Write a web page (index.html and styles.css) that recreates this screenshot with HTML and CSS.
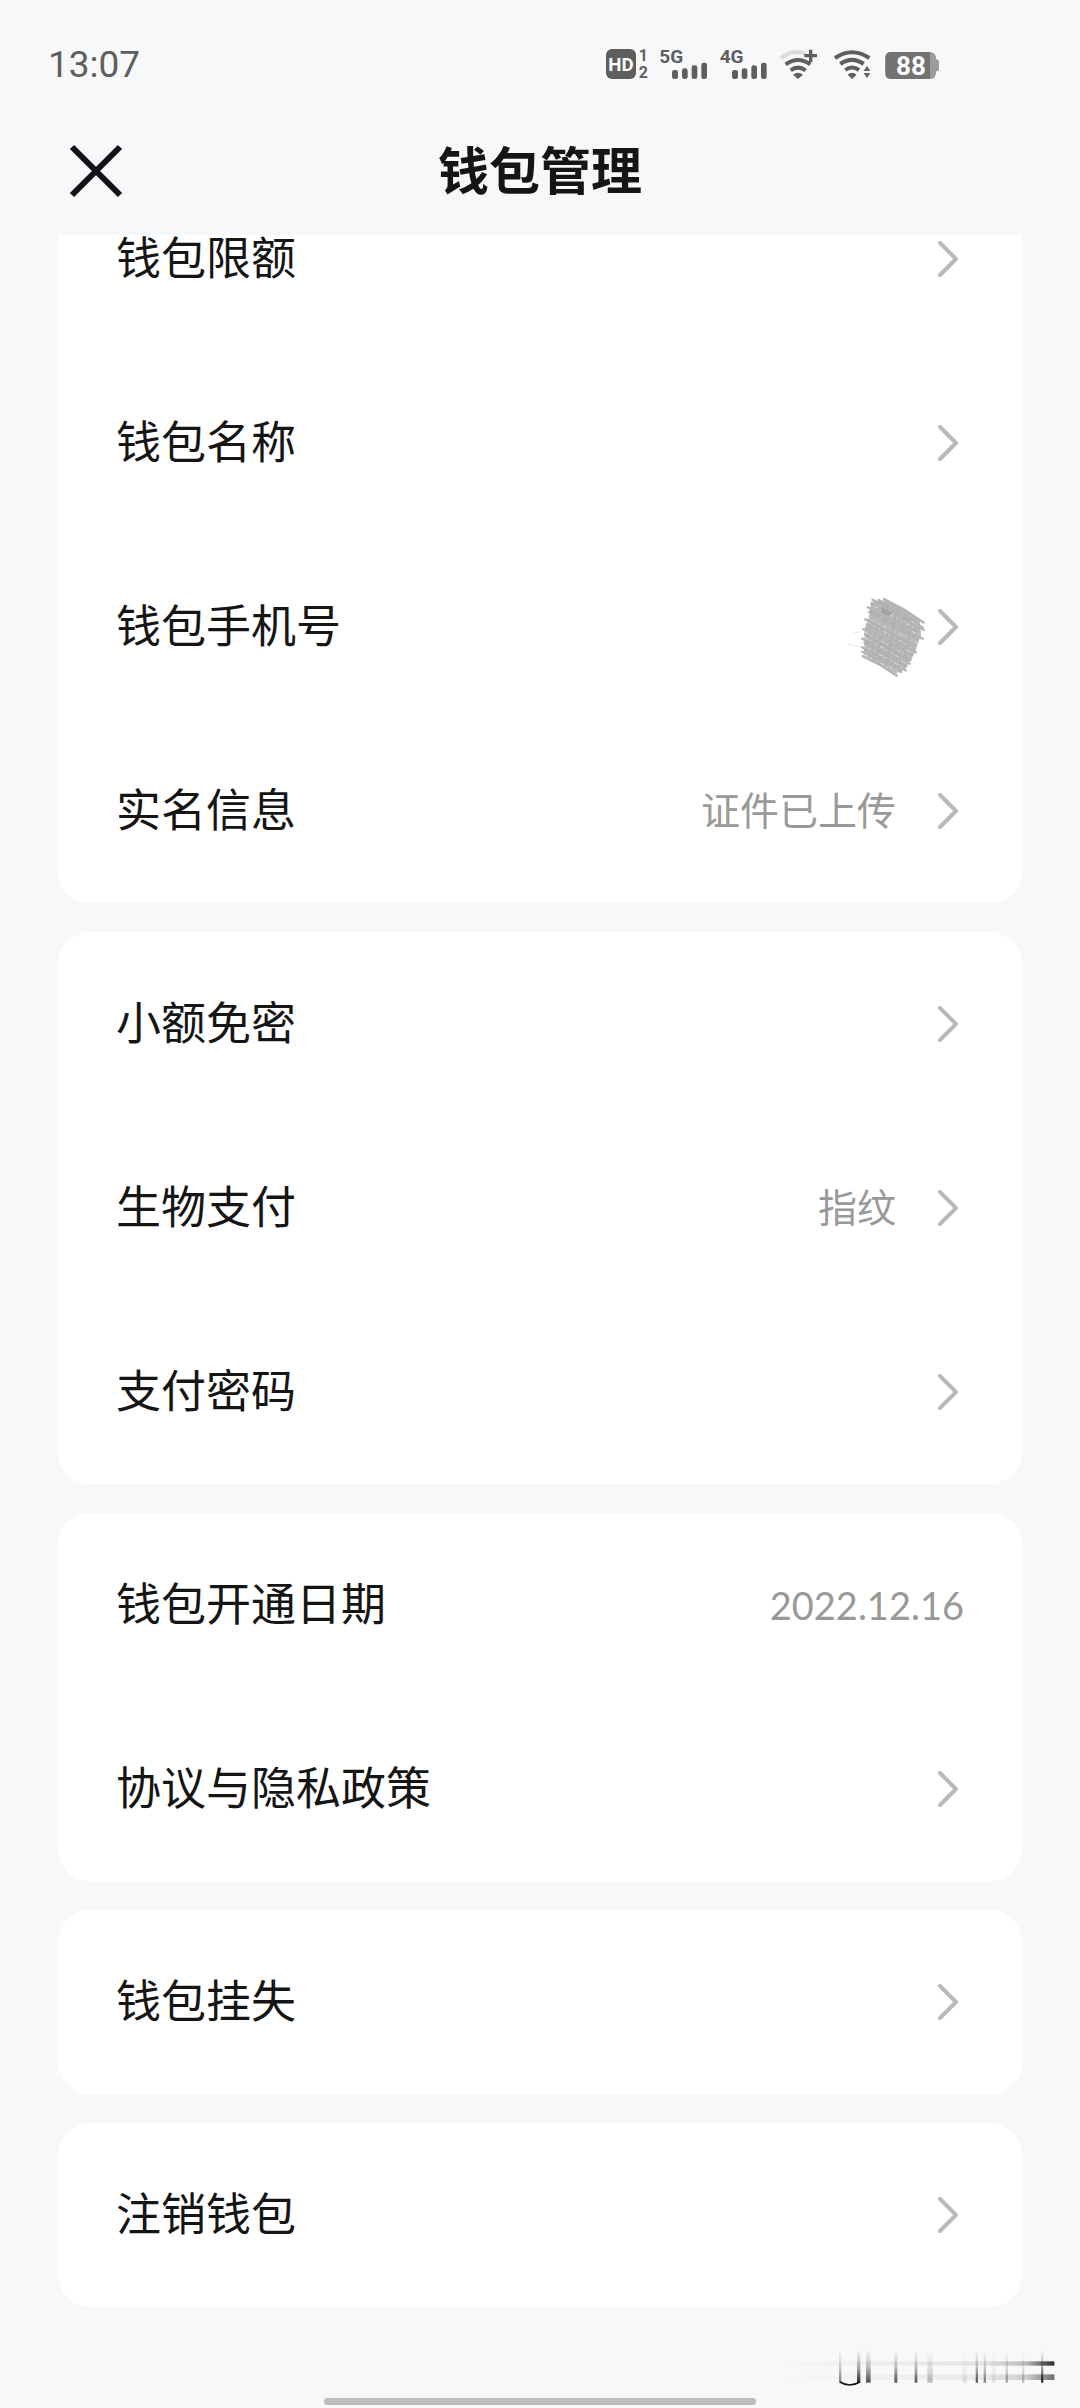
FILE: index.html
```html
<!DOCTYPE html>
<html lang="zh-CN">
<head>
  <meta charset="UTF-8" />
  <meta name="viewport" content="width=device-width, initial-scale=1.0" />
  <title>钱包管理</title>
  <link rel="stylesheet" href="styles.css">
</head>
<body>
  <svg class="sprite" aria-hidden="true">
    <symbol id="arrow" viewBox="0 0 20 36">
      <path d="M2 2 L18 18 L2 34" fill="none" stroke="currentColor" stroke-width="4" stroke-linecap="round" stroke-linejoin="round" />
    </symbol>
  </svg>

  <div class="status-bar">
    <span class="time">13:07</span>
    <div class="status-icons">
      <!-- HD calling, sim 1 and 2 -->
      <svg width="46" height="48" viewBox="42 27 138 144">
        <rect x="48" y="54" width="90" height="90" rx="18" />
        <text class="hd" x="93" y="119" text-anchor="middle">HD</text>
        <text class="sim" x="160" y="89" text-anchor="middle">1</text>
        <text class="sim" x="160" y="141" text-anchor="middle">2</text>
      </svg>
      <!-- 5G signal -->
      <svg width="51" height="48" viewBox="204 27 153 144">
        <text class="net" x="208" y="97">5G</text>
        <rect x="246" y="117" width="18" height="27" rx="7" />
        <rect x="276" y="112" width="17" height="32" rx="7" />
        <rect x="305" y="103" width="17" height="41" rx="7" />
        <rect x="334" y="95" width="17" height="49" rx="7" />
      </svg>
      <!-- 4G signal -->
      <svg width="52" height="48" viewBox="381 27 156 144">
        <text class="net" x="389" y="97">4G</text>
        <rect x="426" y="117" width="18" height="27" rx="7" />
        <rect x="455" y="112" width="17" height="32" rx="7" />
        <rect x="484" y="103" width="17" height="41" rx="7" />
        <rect x="513" y="95" width="17" height="49" rx="7" />
      </svg>
      <!-- wifi plus -->
      <svg width="44" height="48" viewBox="561 27 132 144">
        <path d="M573 82 Q603 54 646 68" fill="none" stroke="#dcdcdc" stroke-width="13" />
        <path d="M587 100 Q624 74 661 100 M602 118 Q624 102 647 118" fill="none" stroke="#5e5e5e" stroke-width="12" />
        <path d="M609 131 Q624 120 639 131 L624 144 Z" />
        <path d="M657 56 H667 V69 H681 V79 H667 V93 H657 V79 H643 V69 H657 Z" />
      </svg>
      <!-- wifi -->
      <svg width="45" height="48" viewBox="717 27 135 144">
        <path d="M735 81 Q786 46 838 81 M751 99 Q786 74 821 99 M766 117 Q786 102 807 117" fill="none" stroke="#5e5e5e" stroke-width="12" />
        <path d="M773 131 Q786 120 800 131 L786 144 Z" />
        <path d="M831 105 L841 120 H821 Z M831 141 L841 126 H821 Z" />
      </svg>
      <!-- battery -->
      <svg width="60" height="48" viewBox="876 27 180 144">
        <rect x="1030" y="85" width="17" height="36" rx="8" fill="#9c9c9c" />
        <rect x="886" y="63" width="152" height="81" rx="17" fill="#9c9c9c" />
        <path d="M903 63 H1020 V144 H903 Q886 144 886 127 V80 Q886 63 903 63 Z" fill="#727272" />
        <text class="level" x="963" y="132" text-anchor="middle">88</text>
      </svg>
    </div>
  </div>

  <header class="nav-bar">
    <button class="close-btn" type="button" aria-label="关闭">
      <svg width="54" height="54" viewBox="0 0 54 54">
        <path d="M3 3 L51 51 M51 3 L3 51" fill="none" stroke="#111317" stroke-width="6" />
      </svg>
    </button>
    <h1>钱包管理</h1>
  </header>

  <main class="content">
    <ul class="card">
      <li><a class="row" href="#limit"><span class="label">钱包限额</span><svg class="arrow"><use href="#arrow" /></svg></a></li>
      <li><a class="row" href="#name"><span class="label">钱包名称</span><svg class="arrow"><use href="#arrow" /></svg></a></li>
      <li>
        <a class="row" href="#phone">
          <span class="label">钱包手机号</span>
          <svg class="scribble" viewBox="90 110 235 250">
            <path d="M160 128 L210 122 L306 184 L310 226 L290 284 L262 330 L234 344 L138 288 L140 210 L154 168 Z" fill="#b9b9b9" />
            <g fill="none" stroke="#b4b4b4" stroke-width="7" stroke-linecap="round">
              <path d="M198 119 L258 150 L318 190" />
              <path d="M182 122 L250 158 L316 206" />
              <path d="M164 121 L240 166 L318 212" />
              <path d="M160 132 L230 174 L304 216" />
              <path d="M150 144 L226 186 L315 239" />
              <path d="M154 158 L300 240" />
              <path d="M142 180 L292 262" />
              <path d="M148 196 L295 280" />
              <path d="M136 210 L280 290" />
              <path d="M142 224 L279 302" />
              <path d="M133 238 L276 314" />
              <path d="M140 252 L266 322" />
              <path d="M132 264 L264 334" />
              <path d="M133 278 L250 339" />
              <path d="M134 291 L184 316 L237 350" />
            </g>
            <path d="M188 146 L222 164 M190 155 L216 168" stroke="#a0a0a0" stroke-width="7" />
            <g fill="none" stroke="#9e9e9e" stroke-width="2" stroke-dasharray="3 4 7 3 2 5">
              <path d="M176 125 L306 202 M160 136 L308 226 M154 152 L304 242 M146 182 L292 268 M142 204 L288 288 M138 226 L276 306 M136 246 L268 324 M136 268 L254 338" />
              <path d="M210 132 L180 288 M236 150 L208 316 M260 166 L232 330 M284 184 L256 310" />
            </g>
            <g fill="none" stroke="#f4f4f4" stroke-width="2" stroke-dasharray="12 9 4 16 3 11">
              <path d="M168 140 L310 218 M145 174 L300 252 M148 188 L290 270 M140 218 L282 296 M138 234 L272 312 M134 258 L264 330 M140 286 L244 342" />
              <path d="M280 186 L318 208 M282 216 L314 232 M268 274 L294 288 M252 306 L274 318 M214 322 L238 336" />
            </g>
            <path d="M92 256 L124 264 M108 220 L130 218" stroke="#e6e6e6" stroke-width="3" />
          </svg>
          <svg class="arrow"><use href="#arrow" /></svg>
        </a>
      </li>
      <li><a class="row" href="#identity"><span class="label">实名信息</span><span class="value">证件已上传</span><svg class="arrow"><use href="#arrow" /></svg></a></li>
    </ul>

    <ul class="card">
      <li><a class="row" href="#small-pay"><span class="label">小额免密</span><svg class="arrow"><use href="#arrow" /></svg></a></li>
      <li><a class="row" href="#biometric"><span class="label">生物支付</span><span class="value">指纹</span><svg class="arrow"><use href="#arrow" /></svg></a></li>
      <li><a class="row" href="#password"><span class="label">支付密码</span><svg class="arrow"><use href="#arrow" /></svg></a></li>
    </ul>

    <ul class="card">
      <li class="row"><span class="label">钱包开通日期</span><span class="date">2022.12.16</span></li>
      <li><a class="row" href="#policy"><span class="label">协议与隐私政策</span><svg class="arrow"><use href="#arrow" /></svg></a></li>
    </ul>

    <ul class="card">
      <li><a class="row" href="#report-loss"><span class="label">钱包挂失</span><svg class="arrow"><use href="#arrow" /></svg></a></li>
    </ul>

    <ul class="card">
      <li><a class="row" href="#cancel"><span class="label">注销钱包</span><svg class="arrow"><use href="#arrow" /></svg></a></li>
    </ul>
  </main>

  <footer class="bottom-bar">
    <!-- faded streaks in the corner -->
    <svg class="streaks" viewBox="100 84 846 120" aria-hidden="true">
      <defs>
        <linearGradient id="down" gradientUnits="userSpaceOnUse" x1="0" y1="90" x2="0" y2="188">
          <stop offset="0" stop-color="#111" stop-opacity="0" />
          <stop offset="0.5" stop-color="#111" stop-opacity="0.3" />
          <stop offset="1" stop-color="#111" stop-opacity="0.9" />
        </linearGradient>
        <linearGradient id="across" gradientUnits="userSpaceOnUse" x1="110" y1="0" x2="944" y2="0">
          <stop offset="0" stop-color="#111" stop-opacity="0" />
          <stop offset="0.75" stop-color="#111" stop-opacity="0.1" />
          <stop offset="0.9" stop-color="#111" stop-opacity="0.3" />
          <stop offset="1" stop-color="#111" stop-opacity="1" />
        </linearGradient>
      </defs>
      <g fill="url(#down)">
        <rect x="298" y="90" width="7" height="98" opacity="0.6" />
        <rect x="352" y="90" width="10" height="98" />
        <rect x="379" y="90" width="14" height="98" opacity="0.8" />
        <rect x="464" y="90" width="9" height="98" opacity="0.8" />
        <rect x="525" y="90" width="8" height="98" opacity="0.8" />
        <rect x="563" y="90" width="16" height="98" opacity="0.3" />
        <rect x="668" y="90" width="14" height="98" opacity="0.1" />
        <rect x="708" y="90" width="7" height="98" opacity="0.8" />
        <rect x="732" y="90" width="7" height="98" opacity="0.6" />
        <rect x="756" y="90" width="12" height="98" opacity="0.1" />
        <rect x="798" y="90" width="7" height="98" opacity="0.4" />
        <rect x="847" y="90" width="7" height="98" opacity="0.3" />
        <rect x="904" y="90" width="7" height="98" />
      </g>
      <g fill="url(#across)">
        <rect x="110" y="124" width="834" height="13" opacity="0.9" />
        <rect x="110" y="163" width="834" height="17" opacity="0.6" />
      </g>
      <path d="M301 186 Q330 204 360 186" fill="none" stroke="#111" stroke-width="5" />
    </svg>
    <div class="home-indicator"></div>
  </footer>
</body>
</html>
```
FILE: styles.css
```css
:root {
  --bg: #f7f8fa;
  --card-bg: #ffffff;
  --text: #151515;
  --muted: #999999;
  --arrow: #b9b9b9;
  --status: #5e5e5e;
}

* {
  box-sizing: border-box;
}

body {
  margin: 0;
  font-family: "Noto Sans CJK SC", sans-serif;
  background-color: var(--bg);
  color: var(--text);
}

.sprite {
  display: none;
}

svg {
  flex: none;
}

/* status bar */
.status-bar {
  display: flex;
  align-items: center;
  justify-content: space-between;
  height: 107px;
  padding: 20px 138px 0 48px;
}

.time {
  padding-top: 2px;
  font-family: Roboto, sans-serif;
  font-size: 37px;
  line-height: 40px;
  color: var(--status);
}

.status-icons {
  display: flex;
  align-items: center;
  gap: 8px;
}

.status-icons svg {
  display: block;
  fill: var(--status);
  font-family: Roboto, sans-serif;
  font-weight: 700;
}

.status-icons .hd {
  fill: #fff;
  font-size: 56px;
}

.status-icons .sim {
  font-size: 48px;
}

.status-icons .net {
  font-size: 57px;
}

.status-icons .level {
  fill: #fff;
  font-size: 78px;
}

/* title */
.nav-bar {
  display: grid;
  grid-template-columns: 1fr auto 1fr;
  align-items: center;
  height: 128px;
  padding: 0 69px;
}

.nav-bar h1 {
  margin: 0;
  padding-bottom: 6px;
  font-size: 51px;
  font-weight: 700;
  line-height: 60px;
}

.close-btn {
  justify-self: start;
  padding: 0;
  border: none;
  background: none;
  cursor: pointer;
}

.close-btn svg {
  display: block;
}

/* settings list */
.content {
  display: flex;
  flex-direction: column;
  gap: 29px;
  padding: 0 58px;
  overflow: hidden;
}

.card {
  margin: 0;
  padding: 0;
  list-style: none;
  background: var(--card-bg);
  border-radius: 32px;
}

/* list is scrolled, first card runs under the title */
.card:first-child {
  margin-top: -68px;
}

.row {
  display: flex;
  align-items: center;
  height: 184px;
  padding: 0 58px;
  color: inherit;
  text-decoration: none;
}

.label {
  flex: 1;
  padding-bottom: 6px;
  font-size: 45px;
  line-height: 64px;
}

.value {
  margin-right: 42px;
  padding-bottom: 6px;
  font-size: 39px;
  line-height: 56px;
  color: var(--muted);
}

.date {
  font-family: Lato, sans-serif;
  font-size: 38px;
  line-height: 56px;
  color: var(--muted);
}

.arrow {
  width: 20px;
  height: 36px;
  margin-right: 6px;
  color: var(--arrow);
}

.scribble {
  width: 78px;
  height: 83px;
  margin: 20px 12px 0 0;
}

/* bottom */
.bottom-bar {
  position: relative;
  display: flex;
  align-items: flex-end;
  justify-content: center;
  height: 101px;
  padding-bottom: 3px;
}

.home-indicator {
  width: 40%;
  height: 7px;
  border-radius: 4px;
  background: #bdbdbd;
}

.streaks {
  position: absolute;
  right: 25px;
  bottom: 20px;
  width: 282px;
  height: 40px;
}
```
